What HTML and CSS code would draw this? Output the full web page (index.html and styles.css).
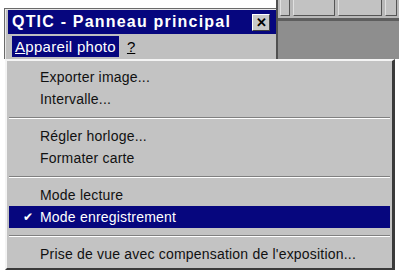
FILE: index.html
```html
<!DOCTYPE html>
<html lang="fr">
<head>
<meta charset="utf-8">
<link rel="stylesheet" href="styles.css">
</head>
<body>
<div class="screen">
  <div class="top">
    <div class="dlg">
      <div class="titlebar">
        <span class="title">QTIC - Panneau principal</span>
        <span class="close">✕</span>
      </div>
      <div class="menubar">
        <span class="menu active"><u>A</u>ppareil photo</span>
        <span class="menu"><u>?</u></span>
      </div>
    </div>
    <div class="back">
      <div class="toolbar">
        <span class="tb tb1"></span>
        <span class="tb tb2"></span>
        <span class="tb tb3"></span>
        <span class="tb tb4"></span>
      </div>
      <div class="backbody"></div>
    </div>
  </div>
  <div class="dropdown">
    <div class="item">Exporter image...</div>
    <div class="item">Intervalle...</div>
    <div class="sep"></div>
    <div class="item">Régler horloge...</div>
    <div class="item">Formater carte</div>
    <div class="sep"></div>
    <div class="item">Mode lecture</div>
    <div class="item selected"><span class="check">✔</span>Mode enregistrement</div>
    <div class="sep"></div>
    <div class="item">Prise de vue avec compensation de l'exposition...</div>
  </div>
</div>
</body>
</html>
```
FILE: styles.css
```css
html, body {
  margin: 0;
  padding: 0;
  background: #fff;
}
.screen {
  width: 399px;
  height: 270px;
  overflow: hidden;
  font-family: "Liberation Sans", Arial, sans-serif;
}
.top {
  display: flex;
  height: 59px;
}
.dlg {
  margin-top: 8px;
  margin-left: 4px;
  width: 272px;
  border-top: 1px solid #6a6a6a;
  border-left: 1px solid #6a6a6a;
  padding: 1px 0 0 3px;
  background: #c0c0c0;
  box-shadow: inset 1px 1px 0 #e8e8e8;
}
.titlebar {
  height: 24px;
  background: #06067e;
  display: flex;
  align-items: center;
  justify-content: space-between;
  padding: 0 6px 0 4px;
}
.title {
  color: #fff;
  font-weight: bold;
  font-size: 16px;
  letter-spacing: 1.2px;
  white-space: nowrap;
}
.close {
  width: 18px;
  height: 17px;
  background: #c8c8c8;
  border-top: 1px solid #fff;
  border-left: 1px solid #fff;
  border-right: 1px solid #404040;
  border-bottom: 1px solid #404040;
  box-sizing: border-box;
  font-size: 13px;
  font-weight: bold;
  line-height: 15px;
  text-align: center;
  color: #000;
  flex: none;
}
.menubar {
  height: 25px;
  display: flex;
  align-items: center;
  gap: 4px;
  padding-left: 4px;
}
.menu {
  font-size: 15px;
  color: #000;
  padding: 2px 4px;
  line-height: 17px;
  white-space: nowrap;
}
.menu.active {
  background: #06067e;
  color: #fff;
  padding: 2px 3px;
  letter-spacing: 0.3px;
}
.back {
  flex: 1;
  display: flex;
  flex-direction: column;
  border-left: 2px solid #505050;
  background: #8e8e8e;
}
.toolbar {
  height: 18px;
  background: #b8b8b8;
  display: flex;
  gap: 3px;
  padding: 0 2px;
  border-bottom: 3px solid #5e5e5e;
}
.tb {
  height: 15px;
  border-right: 1px solid #555;
  border-bottom: 1px solid #555;
  border-left: 1px solid #e0e0e0;
  background: #c2c2c2;
}
.tb1 { width: 8px; }
.tb2 { width: 40px; }
.tb3 { width: 42px; }
.tb4 { width: 10px; }
.backbody {
  flex: 1;
}
.dropdown {
  margin-left: 5px;
  width: 381px;
  background: #c3c3c3;
  border-top: 2px solid #f4f4f4;
  border-left: 2px solid #f4f4f4;
  border-right: 3px solid #3a3a3a;
  border-bottom: 2px solid #3a3a3a;
  padding: 5px 2px 3px 2px;
  display: flex;
  flex-direction: column;
}
.item {
  height: 22px;
  line-height: 22px;
  font-size: 14px;
  letter-spacing: 0.2px;
  color: #111;
  padding-left: 31px;
  position: relative;
  white-space: nowrap;
}
.item.selected {
  background: #06067e;
  color: #fff;
}
.check {
  position: absolute;
  left: 14px;
  top: 0;
  font-size: 12px;
}
.sep {
  height: 15px;
  display: flex;
  flex-direction: column;
  justify-content: center;
}
.sep::before {
  content: "";
  display: block;
  border-top: 1px solid #808080;
  border-bottom: 1px solid #fff;
}
```
